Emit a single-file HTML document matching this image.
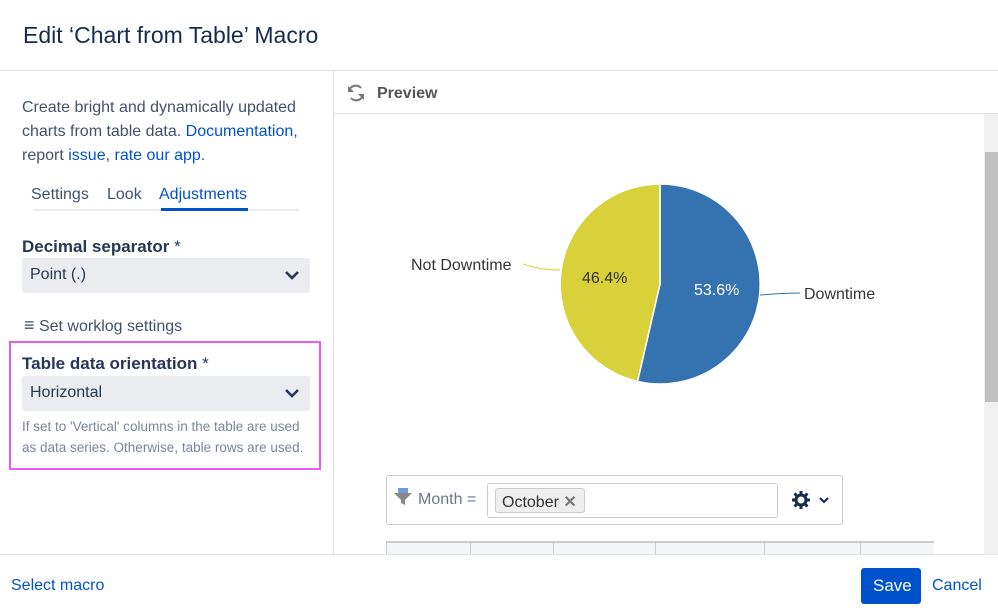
<!DOCTYPE html>
<html><head><meta charset="utf-8"><style>
*{box-sizing:border-box;margin:0;padding:0}
body{width:998px;height:611px;overflow:hidden;background:#fff;font-family:"Liberation Sans",sans-serif;color:#172b4d;position:relative}
.a{position:absolute;white-space:nowrap}
a{color:#0052cc;text-decoration:none}
.sel{position:absolute;left:22px;width:288px;height:35px;background:#ebecf0;border-radius:3px;font-size:16px;color:#253858;padding:8px 0 0 8px}
.sel svg{position:absolute;right:10px;top:11px}
</style></head><body>
<div class="a" style="left:23px;top:22px;font-size:23px;color:#172b4d">Edit ‘Chart from Table’ Macro</div>
<div class="a" style="left:0;top:70px;width:998px;height:1px;background:#dfe1e6"></div>
<div class="a" style="left:333px;top:71px;width:1px;height:483px;background:#dfe1e6"></div>
<div class="a" style="left:0;top:554px;width:998px;height:1px;background:#dfe1e6"></div>

<div class="a" style="left:22px;top:96px;font-size:16px;line-height:24px;color:#42526e;white-space:normal;width:305px">Create bright and dynamically updated charts from table data. <a>Documentation</a>, report <a>issue</a>, <a>rate our app</a>.</div>
<div class="a" style="left:31px;top:186px;font-size:16px;color:#42526e">Settings</div>
<div class="a" style="left:107px;top:186px;font-size:16px;color:#42526e">Look</div>
<div class="a" style="left:159px;top:186px;font-size:16px;color:#0052cc">Adjustments</div>
<div class="a" style="left:34px;top:209px;width:265px;height:2px;background:#ebecf0"></div>
<div class="a" style="left:161px;top:208px;width:87px;height:3px;background:#0052cc"></div>

<div class="a" style="left:22px;top:237px;font-size:17px;font-weight:bold;color:#253858">Decimal separator <span style="font-weight:normal">*</span></div>
<div class="sel" style="top:258px">Point (.)<svg width="16" height="12" viewBox="0 0 16 12"><path d="M2 3l6 6 6-6" stroke="#253858" stroke-width="2.6" fill="none"/></svg></div>
<div class="a" style="left:24px;top:315px;font-size:16px;color:#42526e"><span style="font-size:18px;color:#42526e">≡</span> Set worklog settings</div>

<div class="a" style="left:9px;top:341px;width:312px;height:129px;border:2px solid #e65cf5"></div>
<div class="a" style="left:22px;top:354px;font-size:17px;font-weight:bold;color:#253858">Table data orientation <span style="font-weight:normal">*</span></div>
<div class="sel" style="top:376px">Horizontal<svg width="16" height="12" viewBox="0 0 16 12"><path d="M2 3l6 6 6-6" stroke="#253858" stroke-width="2.6" fill="none"/></svg></div>
<div class="a" style="left:22px;top:416px;font-size:13.5px;line-height:21px;color:#7a869a">If set to 'Vertical' columns in the table are used<br>as data series. Otherwise, table rows are used.</div>

<svg class="a" style="left:346px;top:83px" width="20" height="20" viewBox="0 0 20 20"><path d="M3 8a7 7 0 0 1 12-3M17 12a7 7 0 0 1-12 3" stroke="#777" stroke-width="2" fill="none"/><path d="M2 3v6h6" fill="#777"/><path d="M18 17v-6h-6" fill="#777"/></svg>
<div class="a" style="left:377px;top:85px;font-size:16px;font-weight:bold;color:#555">Preview</div>
<div class="a" style="left:334px;top:113px;width:664px;height:1px;background:#dfe1e6"></div>
<div class="a" style="left:984px;top:114px;width:14px;height:440px;background:#f1f1f1"></div>
<div class="a" style="left:985px;top:152px;width:13px;height:250px;background:#c1c1c1"></div>

<svg class="a" style="left:334px;top:114px" width="650" height="440">
<g transform="translate(-334,-114)">
<path d="M660 284L660 184A100 100 0 1 1 637.5 381.4Z" fill="#3572b0" stroke="#fff" stroke-width="1.5"/>
<path d="M660 284L637.5 381.4A100 100 0 0 1 660 184Z" fill="#d8d13a" stroke="#fff" stroke-width="1.5"/>
<path d="M760 295C775 294 785 293 800 293" stroke="#3572b0" fill="none"/>
<path d="M523 264C535 268 545 270 560 270" stroke="#d8d13a" fill="none"/>
<text x="582" y="283" font-size="16" fill="#333" font-family="Liberation Sans">46.4%</text>
<text x="694" y="295" font-size="16" fill="#fff" font-family="Liberation Sans">53.6%</text>
<text x="411" y="270" font-size="16" fill="#333" font-family="Liberation Sans">Not Downtime</text>
<text x="804" y="299" font-size="16" fill="#333" font-family="Liberation Sans">Downtime</text>
</g></svg>

<div class="a" style="left:386px;top:475px;width:457px;height:50px;border:1px solid #ccc;border-radius:3px"></div>
<svg class="a" style="left:394px;top:488px" width="18" height="18" viewBox="0 0 18 18"><rect x="4" y="0" width="10" height="5" fill="#6d9de0"/><path d="M0 5h18l-7 7v5l-4-2v-3z" fill="#888"/></svg>
<div class="a" style="left:418px;top:491px;font-size:16px;color:#6b778c">Month =</div>
<div class="a" style="left:487px;top:483px;width:291px;height:35px;border:1px solid #ccc;border-radius:3px"></div>
<div class="a" style="left:495px;top:488px;width:90px;height:25px;background:#eee;border:1px solid #ccc;border-radius:3px;font-size:16px;color:#333;padding:3px 0 0 6px">October <span style="color:#777;font-weight:bold">✕</span></div>
<svg class="a" style="left:792px;top:491px" width="18" height="18" viewBox="0 0 18 18"><circle cx="9" cy="9" r="5" stroke="#172b4d" stroke-width="3" fill="none"/><g stroke="#172b4d" stroke-width="3"><path d="M9 0v4M9 14v4M0 9h4M14 9h4M2.5 2.5l3 3M12.5 12.5l3 3M2.5 15.5l3-3M12.5 5.5l3-3"/></g><circle cx="9" cy="9" r="3" fill="#fff"/></svg>
<svg class="a" style="left:819px;top:496px" width="10" height="8"><path d="M1 2l4 4 4-4" stroke="#172b4d" stroke-width="2" fill="none"/></svg>

<div class="a" style="left:386px;top:541px;width:548px;height:13px;background:#f4f5f7;border-top:2px solid #ccc;border-left:1px solid #ccc"></div>
<div class="a" style="left:470px;top:541px;width:1px;height:13px;background:#ccc"></div>
<div class="a" style="left:553px;top:541px;width:1px;height:13px;background:#ccc"></div>
<div class="a" style="left:655px;top:541px;width:1px;height:13px;background:#ccc"></div>
<div class="a" style="left:764px;top:541px;width:1px;height:13px;background:#ccc"></div>
<div class="a" style="left:860px;top:541px;width:1px;height:13px;background:#ccc"></div>

<div class="a" style="left:11px;top:577px;font-size:16px;color:#0052cc">Select macro</div>
<div class="a" style="left:861px;top:568px;width:60px;height:36px;background:#0052cc;border-radius:3px;color:#fff;font-size:17px;padding:8px 0 0 12px">Save</div>
<div class="a" style="left:932px;top:577px;font-size:16px;color:#0052cc">Cancel</div>
</body></html>
